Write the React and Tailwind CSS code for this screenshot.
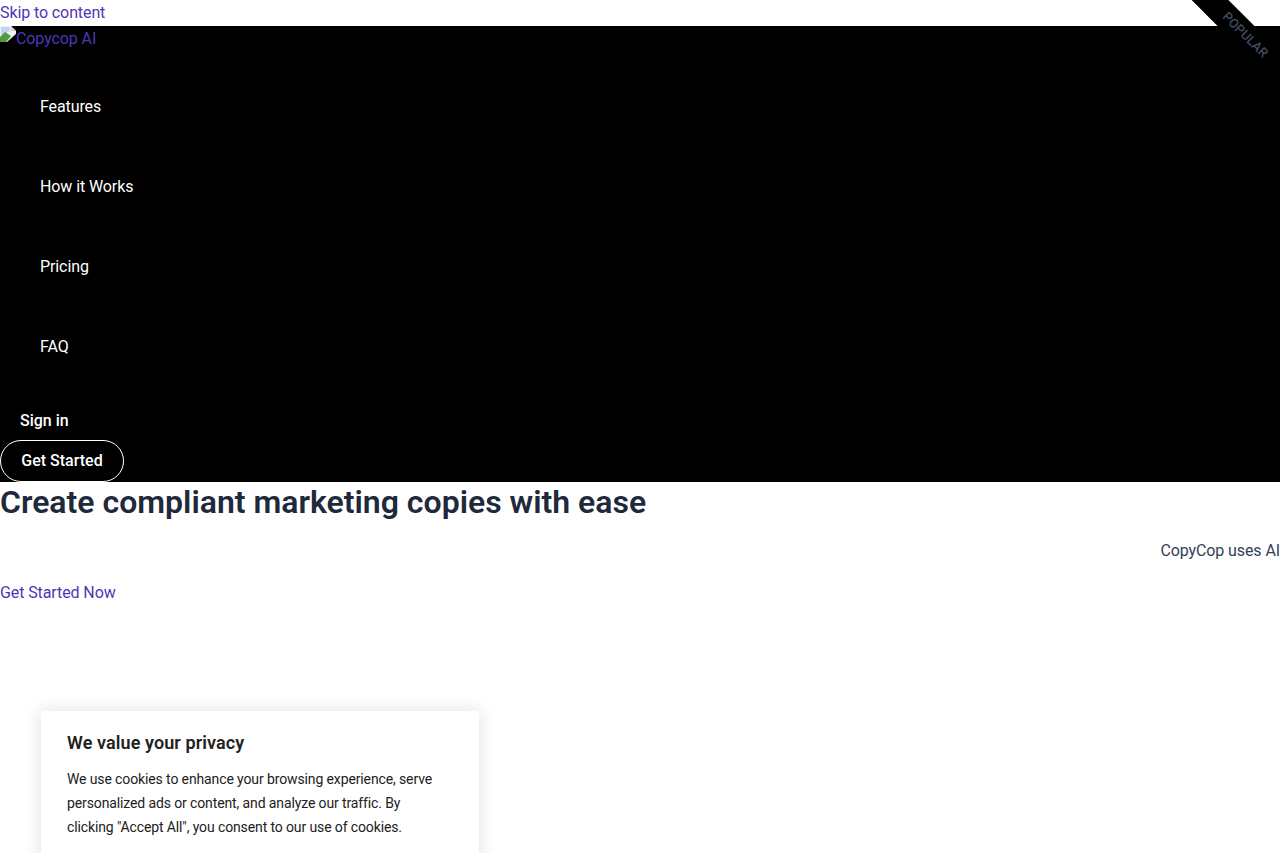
export default function App() {
  const nav = ["Features", "How it Works", "Pricing", "FAQ"];
  return (
    <div className="relative h-[853px] overflow-hidden bg-white font-['Roboto',sans-serif] text-base leading-[25.6px] tracking-[-0.1px] text-[#334155]">
      <a href="#content" className="block h-[26px] text-[#4f35b5]">Skip to content</a>
      <header className="h-[456px] bg-black">
        <a href="#" className="flex h-[26px] items-start text-[#4f35b5]">
          <svg width="16" height="16" viewBox="0 0 16 16" className="shrink-0">
            <path d="M0 0H11L16 5V16H0Z" fill="#f1f1f1" />
            <path d="M11 0V5H16" fill="#cfcfcf" />
            <path d="M1 1H10V5L1 10Z" fill="#c3d4f0" />
            <path d="M0 16V11L5 6L11 10L6 16Z" fill="#4f9a45" />
            <path d="M16 8L7 16H16Z" fill="#000000" />
          </svg>
          <span>Copycop AI</span>
        </a>
        <ul className="mt-[15px] flex flex-col">
          {nav.map((n) => (
            <li key={n} className="flex h-20 items-center pl-10 text-white">{n}</li>
          ))}
        </ul>
        <a href="#" className="mt-[13px] flex h-[40px] items-center pl-5 pt-[1px] font-medium tracking-normal text-white">Sign in</a>
        <a href="#" className="flex h-[42px] w-[124px] items-center justify-center rounded-full border border-white font-medium tracking-normal text-white">Get Started</a>
      </header>
      <h1 className="h-[40px] text-[32px] leading-[40px] font-semibold tracking-normal text-[#1e293b]">Create compliant marketing copies with ease</h1>
      <p className="mt-[16px] text-right">CopyCop uses AI</p>
      <a href="#" className="mt-[16px] block text-[#4f35b5]">Get Started Now</a>

      <div className="absolute right-[-45px] top-[22px] flex h-[26px] w-[160px] rotate-45 items-center justify-center bg-black text-[13px] font-medium tracking-normal text-[#3f4a5f]">
        POPULAR
      </div>

      <section className="absolute left-[41px] top-[711px] h-[180px] w-[438px] rounded bg-white pl-[26px] pr-[40px] pt-[19px] shadow-[0_0_18px_rgba(0,0,0,0.13)]">
        <h2 className="text-lg leading-[25px] font-semibold tracking-[0.1px] text-[#212121]">We value your privacy</h2>
        <p className="mt-[12px] text-sm leading-[24px] tracking-[-0.12px] text-[#212121]">
          We use cookies to enhance your browsing experience, serve personalized ads or content, and analyze our traffic. By clicking "Accept All", you consent to our use of cookies.
        </p>
      </section>
    </div>
  );
}
